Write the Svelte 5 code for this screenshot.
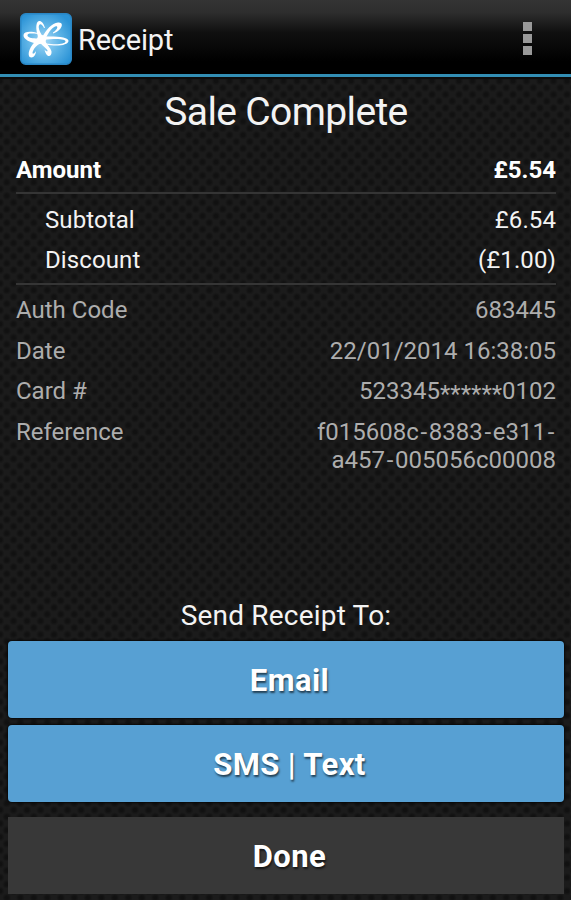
<script>
    const amounts = [
        {label: 'Subtotal', value: '£6.54'},
        {label: 'Discount', value: '(£1.00)'},
    ]

    const details = [
        {label: 'Auth Code', value: '683445'},
        {label: 'Date', value: '22/01/2014 16:38:05'},
        {label: 'Card #', value: '523345******0102'},
        {label: 'Reference', value: 'f015608c-8383-e311-a457-005056c00008'},
    ]

    // masks and hyphens get their own spans, they are set differently from the digits
    function splitValue(value) {
        return value.split(/(\*+|-)/)
    }
</script>

<div class="screen">
    <header class="action-bar">
        <svg class="logo" viewBox="0 0 52 52" width="52" height="52">
            <defs>
                <radialGradient id="tile" cx="46%" cy="54%" r="62%">
                    <stop offset="0" stop-color="#a4d8f6"/>
                    <stop offset="0.5" stop-color="#60b5e7"/>
                    <stop offset="1" stop-color="#2b93d6"/>
                </radialGradient>
            </defs>
            <rect x="0.75" y="0.75" width="50.5" height="50.5" rx="5" fill="url(#tile)" stroke="#2a86c4" stroke-width="1.5"/>
            <g fill="#fff">
                <path d="M20 31C10 30 3 26 3.5 22C4 18 11 18 18 20L18 21C11 20 7 20 7.5 22.5C8 25 14 26 21 25Z"/>
                <path d="M24 23.5C37 23 49 24 48.5 28C48 32 38 34 26 31.5L26 30.5C37 32 45 31 45.5 28.5C46 26 36 25 24 27Z"/>
                <path d="M19 26C16 19 15.5 12 17.5 9C19.5 6.5 23.5 9 25 15L24 15C22 11 20 10.5 19 12.5C18 15 20 20 24 25Z"/>
                <path d="M22 25C26 16 32 10.5 38 9.5C42 9 43 12 40.5 15.5C38.5 18 35.5 20 33 20.5L33 19.5C36 17.5 38 15 37 13.5C35 12 29 17 25 27Z"/>
                <path d="M18 26L24 29C17 31 13 36 12.5 40C13 41.5 15 40 16 38C16 41 14 44.5 11.5 44.5C8.5 44.5 8 41 9.5 37C11 33 14 29 18 26Z"/>
                <path d="M20 29L25 27C26 31 31 35 31.5 38.5C32 42 29.5 44 27.5 42.5C26 41.5 25 39 24.5 36.5C26 38.5 28 39 27.5 37.5C26.5 35 22 33 20 29Z"/>
                <circle cx="21.5" cy="26.5" r="4.5"/>
            </g>
        </svg>
        <h1>Receipt</h1>
        <button class="overflow" aria-label="More options">
            <i></i><i></i><i></i>
        </button>
    </header>

    <main>
        <h2>Sale Complete</h2>

        <div class="receipt">
            <div class="row total">
                <span>Amount</span>
                <span class="value">£5.54</span>
            </div>
            <div class="group amounts">
                {#each amounts as item}
                    <div class="row">
                        <span>{item.label}</span>
                        <span class="value">{item.value}</span>
                    </div>
                {/each}
            </div>
            <div class="group details">
                {#each details as item}
                    <div class="row">
                        <span>{item.label}</span>
                        <span class="value">
                            {#each splitValue(item.value) as part}<span class:mask={part[0] === '*'} class:hyphen={part === '-'}>{part}</span>{/each}
                        </span>
                    </div>
                {/each}
            </div>
        </div>

        <div class="actions">
            <p>Send Receipt To:</p>
            <button class="send">Email</button>
            <button class="send">SMS | Text</button>
            <button class="done">Done</button>
        </div>
    </main>
</div>

<style>
    :global(body) {
        background: #171717;
    }

    .screen {
        display: flex;
        flex-direction: column;
        height: 900px;
        font-family: Roboto, sans-serif;
        color: #f3f3f3;
        background-color: #1b1b1b;
        background-image:
            radial-gradient(circle, #111 1.5px, transparent 4.5px),
            radial-gradient(circle, #111 1.5px, transparent 4.5px);
        background-size: 13.5px 13.5px;
        background-position: 0 0, 6.75px 6.75px;
        overflow: hidden;
    }

    .action-bar {
        display: flex;
        align-items: center;
        box-sizing: border-box;
        height: 77px;
        padding: 0 39px 0 20px;
        background: linear-gradient(#343434, #2e2e2e 12px, #101010 32px, #000 62px);
        border-bottom: 3px solid #328eb4;
        box-shadow: 0 2px 1px #0c0c0c;
    }

    .logo {
        flex: none;
        margin-top: 3px;
    }

    h1 {
        margin: 5px 0 0 6px;
        font-size: 29px;
        line-height: 34px;
        font-weight: 400;
        letter-spacing: -0.2px;
    }

    button {
        border: 0;
        font-family: inherit;
        color: #fff;
    }

    .overflow {
        display: flex;
        flex-direction: column;
        gap: 3px;
        margin: 3px 0 0 auto;
        padding: 0;
        background: none;
    }

    .overflow i {
        width: 9px;
        height: 9px;
        background: #999;
    }

    main {
        display: flex;
        flex: 1;
        flex-direction: column;
    }

    h2 {
        margin: 12px 0 0 1px;
        font-size: 39px;
        line-height: 46px;
        font-weight: 400;
        letter-spacing: -0.63px;
        text-align: center;
    }

    .receipt {
        margin: 14px 15px 0 16px;
        font-size: 24px;
        line-height: 28px;
    }

    .row {
        display: flex;
        justify-content: space-between;
        padding: 6.25px 0;
    }

    .total {
        padding: 7px 0 8.25px;
        font-weight: 700;
        color: #fff;
    }

    .group {
        padding-top: 5px;
        border-top: 2px solid #353535;
    }

    .amounts {
        padding-bottom: 3px;
    }

    .amounts .row {
        padding-left: 29px;
        letter-spacing: 0.1px;
    }

    .details {
        padding-top: 4.5px;
        color: #adadad;
    }

    .value {
        max-width: 250px;
        text-align: right;
    }

    .mask {
        line-height: 0;
        vertical-align: -3px;
    }

    .hyphen {
        margin: 0 1.7px;
    }

    .actions {
        display: flex;
        flex-direction: column;
        margin: auto 7px 6px 8px;
    }

    p {
        margin: 0 0 8px;
        font-size: 28px;
        line-height: 34px;
        letter-spacing: 0.2px;
        text-align: center;
    }

    .send,
    .done {
        height: 77px;
        padding: 2px 0 0 7px;
        font-size: 31px;
        font-weight: 700;
        letter-spacing: 0.4px;
        text-shadow: 1px 2px 2px rgba(0, 0, 0, 0.6);
    }

    .send {
        margin-bottom: 7px;
        border-radius: 4px;
        background: #57a0d3;
        box-shadow: 0 0 2px 1px #080808;
    }

    .done {
        margin-top: 8px;
        background: #383838;
    }
</style>
